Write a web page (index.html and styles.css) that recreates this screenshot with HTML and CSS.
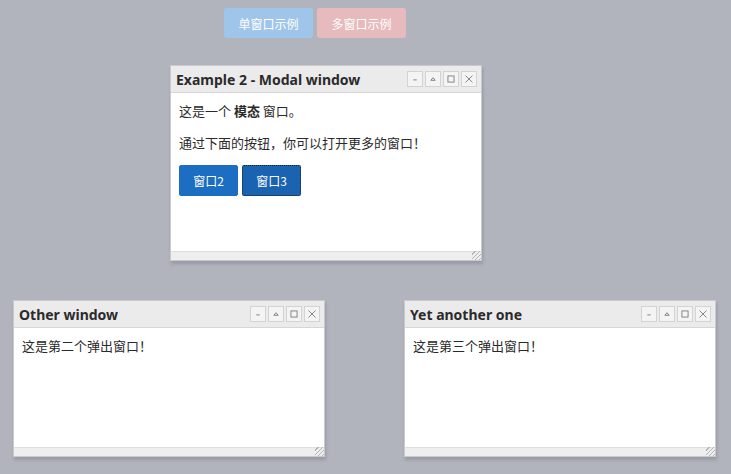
FILE: index.html
```html
<!DOCTYPE html>
<html lang="zh">
  <head>
    <meta charset="UTF-8" />
    <title>窗口示例</title>
    <link rel="stylesheet" href="styles.css">
  </head>
  <body>
    <div class="toolbar">
      <button class="top-btn blue">单窗口示例</button>
      <button class="top-btn pink">多窗口示例</button>
    </div>

    <div class="desktop">
      <div class="win win-modal">
        <div class="win-title">
          <span class="win-name">Example 2 - Modal window</span>
          <div class="win-ctrls">
            <span class="ctrl"><svg viewBox="0 0 16 16"><path d="M6 9h4"/></svg></span>
            <span class="ctrl"><svg viewBox="0 0 16 16"><path d="M5.5 9.5L8 6.5l2.5 3z"/></svg></span>
            <span class="ctrl"><svg viewBox="0 0 16 16"><rect x="4.5" y="4.5" width="7" height="7"/></svg></span>
            <span class="ctrl"><svg viewBox="0 0 16 16"><path d="M4 4l8 8M12 4l-8 8"/></svg></span>
          </div>
        </div>
        <div class="win-body">
          <p>这是一个 <b>模态</b> 窗口。</p>
          <p>通过下面的按钮，你可以打开更多的窗口！</p>
          <div class="btn-row">
            <button class="win-btn">窗口2</button>
            <button class="win-btn focused">窗口3</button>
          </div>
        </div>
        <div class="win-foot"><span class="grip"></span></div>
      </div>

      <div class="win win-other">
        <div class="win-title">
          <span class="win-name">Other window</span>
          <div class="win-ctrls">
            <span class="ctrl"><svg viewBox="0 0 16 16"><path d="M6 9h4"/></svg></span>
            <span class="ctrl"><svg viewBox="0 0 16 16"><path d="M5.5 9.5L8 6.5l2.5 3z"/></svg></span>
            <span class="ctrl"><svg viewBox="0 0 16 16"><rect x="4.5" y="4.5" width="7" height="7"/></svg></span>
            <span class="ctrl"><svg viewBox="0 0 16 16"><path d="M4 4l8 8M12 4l-8 8"/></svg></span>
          </div>
        </div>
        <div class="win-body">
          <p>这是第二个弹出窗口！</p>
        </div>
        <div class="win-foot"><span class="grip"></span></div>
      </div>

      <div class="win win-another">
        <div class="win-title">
          <span class="win-name">Yet another one</span>
          <div class="win-ctrls">
            <span class="ctrl"><svg viewBox="0 0 16 16"><path d="M6 9h4"/></svg></span>
            <span class="ctrl"><svg viewBox="0 0 16 16"><path d="M5.5 9.5L8 6.5l2.5 3z"/></svg></span>
            <span class="ctrl"><svg viewBox="0 0 16 16"><rect x="4.5" y="4.5" width="7" height="7"/></svg></span>
            <span class="ctrl"><svg viewBox="0 0 16 16"><path d="M4 4l8 8M12 4l-8 8"/></svg></span>
          </div>
        </div>
        <div class="win-body">
          <p>这是第三个弹出窗口！</p>
        </div>
        <div class="win-foot"><span class="grip"></span></div>
      </div>
    </div>
  </body>
</html>
```

FILE: styles.css
```css
html, body {
  height: 100%;
}
body {
  margin: 0;
  font-family: "Noto Sans CJK SC", "Noto Sans", sans-serif;
  background: #b1b4bc;
  color: #2a2a2a;
  overflow: hidden;
}
.toolbar {
  display: flex;
  gap: 4px;
  padding: 8px 0 0 224px;
}
.top-btn {
  width: 89px;
  height: 30px;
  border: none;
  border-radius: 3px;
  color: #ffffff;
  font-family: inherit;
  font-size: 12px;
  cursor: pointer;
}
.top-btn.blue {
  background-color: #9fc6ea;
}
.top-btn.pink {
  background-color: #e7babd;
}
.desktop {
  position: relative;
}
.win {
  position: absolute;
  display: flex;
  flex-direction: column;
  width: 312px;
  background: #ffffff;
  border: 1px solid #c9cacd;
  box-shadow: 1px 3px 3px rgba(80, 80, 90, 0.25);
  box-sizing: border-box;
}
.win-modal {
  left: 170px;
  top: 27px;
  height: 196px;
}
.win-other {
  left: 13px;
  top: 262px;
  height: 157px;
}
.win-another {
  left: 404px;
  top: 262px;
  height: 157px;
}
.win-title {
  display: flex;
  justify-content: space-between;
  align-items: center;
  height: 26px;
  padding: 0 4px 0 5px;
  background: #ebebeb;
  border-bottom: 1px solid #d6d6d6;
  flex-shrink: 0;
}
.win-name {
  font-family: "Noto Sans", sans-serif;
  font-weight: bold;
  font-size: 14px;
  color: #2b2b2b;
}
.win-ctrls {
  display: flex;
  gap: 2px;
}
.ctrl {
  width: 16px;
  height: 16px;
  box-sizing: border-box;
  border: 1px solid #d3d3d3;
  background: #f4f4f4;
}
.ctrl svg {
  display: block;
  width: 14px;
  height: 14px;
  fill: none;
  stroke: #777;
  stroke-width: 1;
}
.win-body {
  flex: 1;
  padding: 8px 8px;
  font-family: "Noto Sans CJK TC", "Noto Sans CJK SC", sans-serif;
  font-size: 13px;
}
.win-body p {
  margin: 0 0 12px 0;
  line-height: 20px;
}
.btn-row {
  display: flex;
  gap: 4px;
}
.win-btn {
  width: 59px;
  height: 31px;
  border: 1px solid #1b6ec2;
  border-radius: 2px;
  background-color: #1b6ec2;
  color: #ffffff;
  font-family: inherit;
  font-size: 12px;
  cursor: pointer;
}
.win-btn.focused {
  background-color: #1a63b0;
  border: 1px dotted #222;
}
.win-foot {
  position: relative;
  height: 8px;
  background: #eeeeee;
  border-top: 1px solid #dedede;
  flex-shrink: 0;
}
.grip {
  position: absolute;
  right: 0;
  bottom: 0;
  width: 9px;
  height: 9px;
  background: repeating-linear-gradient(135deg, transparent 0 2px, #b5b5b5 2px 3px);
}
```
